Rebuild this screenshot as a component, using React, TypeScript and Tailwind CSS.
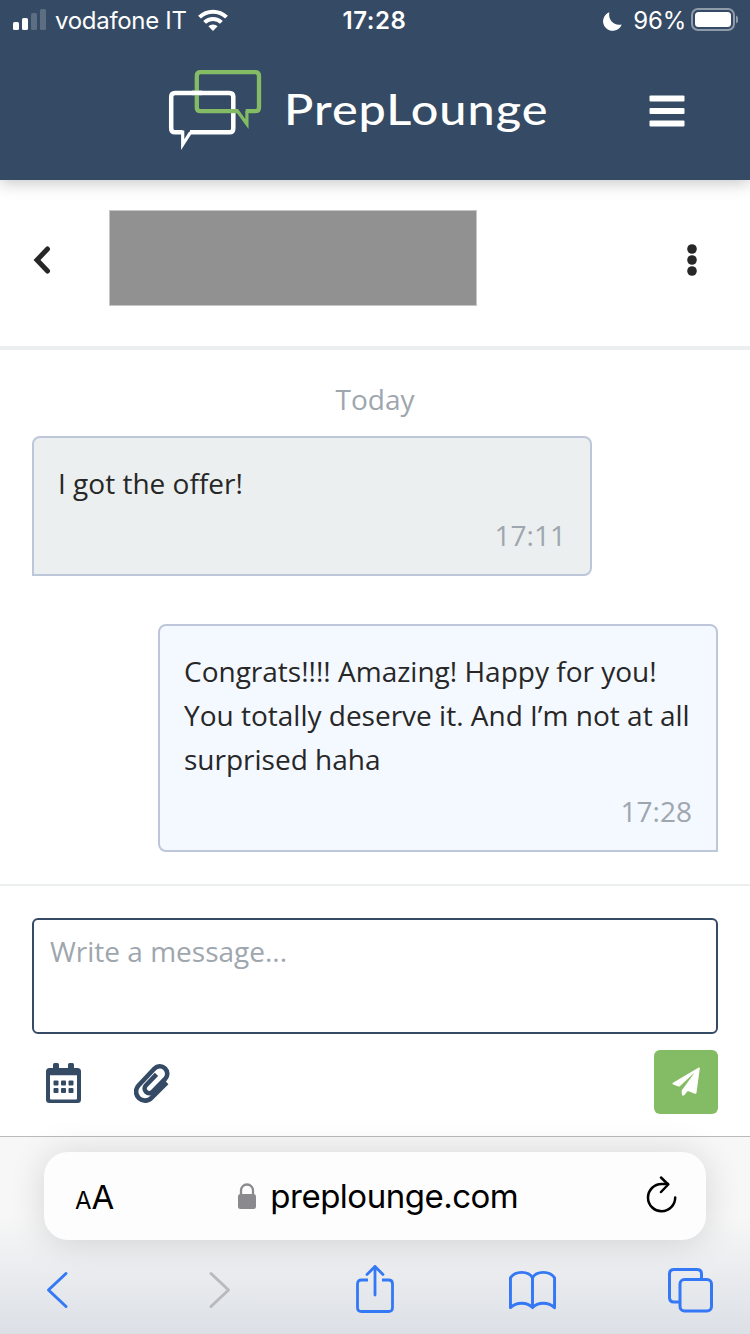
import React from 'react';

type Message = {
  text: string;
  time: string;
  own: boolean;
};

const messages: Message[] = [
  { text: 'I got the offer!', time: '17:11', own: false },
  {
    text: 'Congrats!!!! Amazing! Happy for you! You totally deserve it. And I’m not at all surprised haha',
    time: '17:28',
    own: true,
  },
];

const StatusBar: React.FC = () => (
  <div className="grid grid-cols-3 h-10 pl-[13px] pr-3 items-center font-['Inter'] text-[24px] leading-none">
    <div className="flex items-center whitespace-nowrap">
      <svg width="33" height="22" viewBox="0 0 33 22" fill="#fff">
        <rect x="0" y="13" width="6" height="8" rx="1.5" />
        <rect x="9" y="9" width="6" height="12" rx="1.5" />
        <rect x="18" y="4" width="6" height="17" rx="1.5" opacity=".2" />
        <rect x="27" y="0" width="6" height="21" rx="1.5" opacity=".2" />
      </svg>
      <span className="ml-[9px] mt-[2px] tracking-[-0.3px]">vodafone IT</span>
      <svg className="ml-[11px]" width="30" height="22" viewBox="0 0 30 22" fill="none" stroke="#fff" strokeWidth="4">
        <path d="M1.5 8.2a19.2 19.2 0 0 1 27 0" />
        <path d="M6.6 13.4a12 12 0 0 1 16.8 0" />
        <path d="M10.4 17.3a6.6 6.6 0 0 1 9.2 0L15 22z" fill="#fff" stroke="none" />
      </svg>
    </div>
    <div className="mt-[2px] -ml-[2px] text-center font-semibold tracking-[0.6px]">17:28</div>
    <div className="flex items-center justify-end">
      <svg className="mt-[2px]" width="19" height="19" viewBox="0 0 19 19" fill="#fff">
        <path d="M6.4.2C4.9 6.5 9.6 14.4 18.7 12.5A9.6 9.6 0 1 1 6.4.2z" />
      </svg>
      <span className="ml-[11px] mt-[2px] tracking-[-0.2px]">96%</span>
      <svg className="ml-[5px]" width="47" height="24" viewBox="0 0 47 24">
        <rect x="1" y="1" width="42" height="21" rx="6" fill="none" stroke="#fff" strokeOpacity=".45" strokeWidth="2" />
        <rect x="4" y="4" width="36" height="15" rx="3.5" fill="#fff" />
        <path d="M45 7.500v8a4.500 4.500 0 0 0 0-8z" fill="#fff" opacity=".45" />
      </svg>
    </div>
  </div>
);

const Header: React.FC = () => (
  <header className="relative z-10 h-[180px] bg-[#354a64] text-white shadow-[0_2px_16px_rgba(0,0,0,0.25)]">
    <StatusBar />
    <div className="flex h-[140px] items-start pl-[168px] pr-[65px]">
      <svg className="mt-[29px] shrink-0" width="94" height="82" viewBox="0 0 94 82" fill="none" strokeWidth="4.5">
        <path
          d="M22 63.300H61.500Q65.300 63.300 65.300 59.500V27.700Q65.300 23.900 61.500 23.900H7Q3.200 23.900 3.200 27.700V59.500Q3.200 63.300 7 63.300H14.500"
          stroke="#fff"
        />
        <path d="M14.700 61.500V75.500L22.500 63.300" stroke="#fff" strokeWidth="3.200" />
        <path
          d="M77.700 42.200H87.200Q91 42.200 91 38.400V7Q91 3.200 87.200 3.200H32.600Q28.800 3.200 28.800 7V38.400Q28.800 42.200 32.600 42.200H70.500"
          stroke="#83bc64"
          strokeWidth="4.300"
        />
        <path d="M69.500 42L78.900 55V42" stroke="#83bc64" strokeWidth="3.200" />
        <path d="M24 23.900H34" stroke="#fff" />
      </svg>
      <span className="ml-[22px] mt-[39px] w-[262px] origin-left scale-x-[1.13] whitespace-nowrap font-['Lato'] text-[43px] leading-[60px] font-medium tracking-[0.9px]">
        PrepLounge
      </span>
      <svg className="ml-auto mt-[55px] shrink-0" width="36" height="32" viewBox="0 0 36 32" fill="#fff">
        <rect x="0.500" y="0.500" width="35" height="6" rx="1" />
        <rect x="0.500" y="13" width="35" height="6" rx="1" />
        <rect x="0.500" y="25.500" width="35" height="6" rx="1" />
      </svg>
    </div>
  </header>
);

const ChatHeader: React.FC = () => (
  <div className="flex h-[170px] items-start border-b-4 border-[#ebeff0] pl-[33px] pr-[53px]">
    <svg className="mt-[66px]" width="18" height="28" viewBox="0 0 18 28" fill="none" stroke="#272727" strokeWidth="5" strokeLinecap="round">
      <path d="M14.500 3L4 14l10.500 11" />
    </svg>
    <div className="ml-[58px] mt-[30px] h-[96px] w-[368px] border border-[#c6c6c6] bg-[#919191]" />
    <svg className="ml-auto mt-[64px]" width="10" height="32" viewBox="0 0 10 32" fill="#272727">
      <circle cx="5" cy="5" r="4.800" />
      <circle cx="5" cy="16" r="4.800" />
      <circle cx="5" cy="27" r="4.800" />
    </svg>
  </div>
);

const Bubble: React.FC<{ message: Message }> = ({ message }) => (
  <div
    className={
      message.own
        ? 'ml-auto w-[560px] rounded-lg rounded-br-none border-2 border-[#bdc7d9] bg-[#f4f8ff] px-6 pt-[23px] pb-[17px]'
        : 'w-[560px] rounded-lg rounded-bl-none border-2 border-[#bdc7d9] bg-[#ebeff0] px-6 pt-[23px] pb-[17px]'
    }
  >
    <p className="-mr-2">{message.text}</p>
    <p className="mt-2 text-right text-[#9ea6ae]">{message.time}</p>
  </div>
);

const Composer: React.FC = () => (
  <div className="h-[252px] border-t-2 border-[#ebeff0] px-8 pt-8">
    <div className="h-[116px] rounded-md border-2 border-[#354a64] px-4 pt-[9px] text-[#9ea6ae]">Write a message...</div>
    <div className="mt-4 flex items-start">
      <svg className="ml-[14px] mt-[13px]" width="35" height="40" viewBox="0 0 35 40" fill="#354a64">
        <rect x="7" y="0" width="6" height="8" rx="1.500" />
        <rect x="22" y="0" width="6" height="8" rx="1.500" />
        <path fillRule="evenodd" d="M3.500 5h28A3.500 3.500 0 0 1 35 8.500v28a3.500 3.500 0 0 1-3.500 3.500h-28A3.500 3.500 0 0 1 0 36.500v-28A3.500 3.500 0 0 1 3.500 5zM4 12.300V35.500q0 1 1 1H30q1 0 1-1V12.300z" />
        <rect x="7.500" y="17.500" width="5" height="5" rx="1" />
        <rect x="15" y="17.500" width="5" height="5" rx="1" />
        <rect x="22.500" y="17.500" width="5" height="5" rx="1" />
        <rect x="7.500" y="25" width="5" height="5" rx="1" />
        <rect x="15" y="25" width="5" height="5" rx="1" />
        <rect x="22.500" y="25" width="5" height="5" rx="1" />
      </svg>
      <svg className="ml-[53px] mt-[12px]" width="36" height="42" viewBox="0 0 36 42" fill="none" stroke="#354a64" strokeWidth="4.600" strokeLinejoin="round">
        <path d="M32.800 20.500L17.500 35.800A8.600 8.600 0 0 1 4.500 23.500L20.500 6.500A7.400 7.400 0 0 1 31.200 16.800L18.500 29.800A4.600 4.600 0 0 1 11.800 23.500L22.500 12.300" />
      </svg>
      <button className="ml-auto flex size-16 rounded-md bg-[#83bc64]">
        <svg className="ml-[18px] mt-[17px]" width="28" height="29" viewBox="0 0 28 29" fill="#fff">
          <path d="M26.700.5Q28 0 27.800 1.500L24.500 25.800Q24.200 27.300 22.800 26.700L15.800 24 12.200 28.200Q10.200 29.400 9.800 27.300L9.700 23.500 22.700 5.500 7.200 19.700 1.200 17.500Q-.3 16.700 1 15.700z" />
        </svg>
      </button>
    </div>
  </div>
);

const BrowserBar: React.FC = () => (
  <footer className="h-[198px] border-t border-[#b9babb] bg-linear-to-b from-[#f7f7f7] from-40% to-[#dce0e6] pt-[15px] font-['Inter']">
    <div className="mx-[44px] flex h-[88px] items-center rounded-[24px] bg-[#fdfdfd] pl-[31px] pr-[29px] text-black shadow-[0_2px_36px_rgba(0,0,0,0.14)]">
      <span className="mt-[5px] flex items-baseline leading-[44px]">
        <span className="text-[24px]">A</span>
        <span className="text-[33px]">A</span>
      </span>
      <svg className="ml-[123px]" width="20" height="28" viewBox="0 0 20 28">
        <path d="M4 13V8.500a6 6 0 0 1 12 0V13" fill="none" stroke="#8a8a8e" strokeWidth="2.300" />
        <rect x="1" y="12" width="18" height="15" rx="2.500" fill="#8a8a8e" />
      </svg>
      <span className="ml-[13px] text-[33px] leading-[44px] tracking-[-0.5px]">preplounge.com</span>
      <svg className="ml-auto -mt-[2px]" width="31" height="38" viewBox="0 0 31 38" fill="none" stroke="#000" strokeWidth="2.500" strokeLinecap="round" strokeLinejoin="round">
        <path d="M29.200 21.500A13.600 13.600 0 1 1 15.600 8H22" />
        <path d="M15 1.500l7.200 7-7.200 7.500" />
      </svg>
    </div>
    <div className="mt-[24px] flex h-[52px] items-center pl-[45px] text-[#3478f6]">
      <svg width="24" height="38" viewBox="0 0 24 38" fill="none" stroke="currentColor" strokeWidth="3" strokeLinecap="round" strokeLinejoin="round">
        <path d="M21 2.500L3.500 19 21 35.500" />
      </svg>
      <svg className="ml-[138px]" width="24" height="38" viewBox="0 0 24 38" fill="none" stroke="#b8babd" strokeWidth="3" strokeLinecap="round" strokeLinejoin="round">
        <path d="M4 2.500L21.500 19 4 35.500" />
      </svg>
      <svg className="ml-[124px] -mt-[2px]" width="40" height="50" viewBox="0 0 40 50" fill="none" stroke="currentColor" strokeWidth="2.800" strokeLinejoin="round">
        <path d="M13 16H6.500Q2.500 16 2.500 20V43.500Q2.500 47.500 6.500 47.500H33.500Q37.500 47.500 37.500 43.500V20Q37.500 16 33.500 16H27" />
        <path d="M20 31V2.500M12 10.500l8-8 8 8" strokeLinecap="round" />
      </svg>
      <svg className="ml-[113px]" width="49" height="42" viewBox="0 0 50 42" fill="none" stroke="currentColor" strokeWidth="3" strokeLinejoin="round">
        <path d="M25 8.500Q22 3 14 3 6 3 2.500 8.500V39Q7 34.500 14 34.500 21 34.500 25 39 29 34.500 36 34.500 43 34.500 47.500 39V8.500Q44 3 36 3 28 3 25 8.500zV39" />
      </svg>
      <svg className="ml-[110px]" width="46" height="46" viewBox="0 0 46 46" fill="none" stroke="currentColor" strokeWidth="3">
        <path d="M12 35H7Q2.500 35 2.500 30.500V7Q2.500 2.500 7 2.500H30Q34.500 2.500 34.500 7V12" />
        <rect x="13" y="12.500" width="31.500" height="31.500" rx="4.500" />
      </svg>
    </div>
  </footer>
);

const App: React.FC = () => {
  return (
    <div className="h-[1334px] w-[750px] overflow-hidden bg-white font-['Open_Sans',sans-serif] text-[28px] leading-[44px] text-[#272727]">
      <Header />
      <ChatHeader />
      <main className="h-[534px] px-8 pt-[27px]">
        <p className="text-center text-[#9ea6ae]">Today</p>
        <div className="mt-[15px] flex flex-col gap-12">
          {messages.map((message) => (
            <Bubble key={message.time} message={message} />
          ))}
        </div>
      </main>
      <Composer />
      <BrowserBar />
    </div>
  );
};

export default App;
